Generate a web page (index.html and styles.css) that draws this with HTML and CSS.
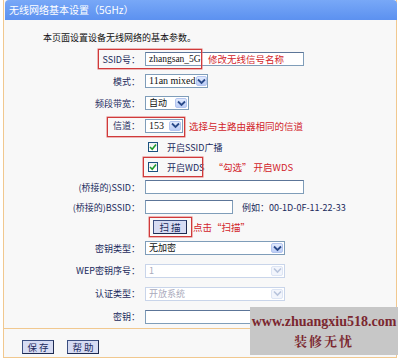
FILE: index.html
```html
<!DOCTYPE html>
<html lang="zh-CN">
<head>
    <meta charset="UTF-8">
    <title>无线网络基本设置（5GHz）</title>
    <link rel="stylesheet" href="styles.css">
</head>
<body>
    <div class="frame">
        <div class="title-bar">无线网络基本设置（5GHz）</div>

        <div class="content">
            <p class="intro">本页面设置设备无线网络的基本参数。</p>

            <!-- SSID -->
            <div class="row">
                <span class="label">SSID号：</span>
                <div class="field">
                    <span class="input input-wide">zhangsan_5G</span>
                </div>
                <span class="mark mark-ssid"></span>
                <span class="note note-ssid">修改无线信号名称</span>
            </div>

            <div class="row">
                <span class="label">模式：</span>
                <div class="field">
                    <span class="select select-mode">
                        <span class="select-text">11an mixed</span>
                        <span class="arrow"><svg width="9" height="7" viewBox="0 0 9 7"><path d="M1 1.5 L4.5 5 L8 1.5" fill="none" stroke="#2a4a8a" stroke-width="1.8"/></svg></span>
                    </span>
                </div>
            </div>

            <div class="row">
                <span class="label">频段带宽：</span>
                <div class="field">
                    <span class="select select-band">
                        <span class="select-text">自动</span>
                        <span class="arrow"><svg width="9" height="7" viewBox="0 0 9 7"><path d="M1 1.5 L4.5 5 L8 1.5" fill="none" stroke="#2a4a8a" stroke-width="1.8"/></svg></span>
                    </span>
                </div>
            </div>

            <div class="row row-loose">
                <span class="label">信道：</span>
                <div class="field">
                    <span class="select select-channel">
                        <span class="select-text">153</span>
                        <span class="arrow"><svg width="9" height="7" viewBox="0 0 9 7"><path d="M1 1.5 L4.5 5 L8 1.5" fill="none" stroke="#2a4a8a" stroke-width="1.8"/></svg></span>
                    </span>
                    <span class="note">选择与主路由器相同的信道</span>
                </div>
                <span class="mark mark-channel"></span>
            </div>

            <div class="row row-tight">
                <span class="label"></span>
                <div class="field">
                    <label class="check">
                        <span class="box"><svg width="8" height="8" viewBox="0 0 8 8"><path d="M1 4 L3.2 6.2 L7 1.5" fill="none" stroke="#1e9a2e" stroke-width="1.6"/></svg></span>
                        开启SSID广播
                    </label>
                </div>
            </div>

            <div class="row row-tight">
                <span class="label"></span>
                <div class="field">
                    <label class="check">
                        <span class="box"><svg width="8" height="8" viewBox="0 0 8 8"><path d="M1 4 L3.2 6.2 L7 1.5" fill="none" stroke="#1e9a2e" stroke-width="1.6"/></svg></span>
                        开启WDS
                    </label>
                    <span class="note note-wds">“勾选” 开启WDS</span>
                </div>
                <span class="mark mark-wds"></span>
            </div>

            <div class="row row-tight">
                <span class="label">(桥接的)SSID：</span>
                <div class="field">
                    <span class="input input-wide"></span>
                </div>
            </div>

            <div class="row row-tight">
                <span class="label">(桥接的)BSSID：</span>
                <div class="field">
                    <span class="input input-bssid"></span>
                    <span class="hint">例如：00-1D-0F-11-22-33</span>
                </div>
            </div>

            <div class="row row-tight">
                <span class="label"></span>
                <div class="field">
                    <button class="btn btn-scan">扫 描</button>
                    <span class="note">点击“扫描”</span>
                </div>
                <span class="mark mark-scan"></span>
            </div>

            <div class="row">
                <span class="label">密钥类型：</span>
                <div class="field">
                    <span class="select select-long">
                        <span class="select-text">无加密</span>
                        <span class="arrow"><svg width="9" height="7" viewBox="0 0 9 7"><path d="M1 1.5 L4.5 5 L8 1.5" fill="none" stroke="#2a4a8a" stroke-width="1.8"/></svg></span>
                    </span>
                </div>
            </div>

            <div class="row row-loose">
                <span class="label">WEP密钥序号：</span>
                <div class="field">
                    <span class="select select-long disabled">
                        <span class="select-text">1</span>
                        <span class="arrow"><svg width="9" height="7" viewBox="0 0 9 7"><path d="M1 1.5 L4.5 5 L8 1.5" fill="none" stroke="#b8c4dc" stroke-width="1.6"/></svg></span>
                    </span>
                </div>
            </div>

            <div class="row row-loose">
                <span class="label">认证类型：</span>
                <div class="field">
                    <span class="select select-long disabled">
                        <span class="select-text">开放系统</span>
                        <span class="arrow"><svg width="9" height="7" viewBox="0 0 9 7"><path d="M1 1.5 L4.5 5 L8 1.5" fill="none" stroke="#b8c4dc" stroke-width="1.6"/></svg></span>
                    </span>
                </div>
            </div>

            <div class="row row-loose">
                <span class="label">密钥：</span>
                <div class="field">
                    <span class="input input-key"></span>
                </div>
            </div>
        </div>

        <div class="footer">
            <button class="btn">保 存</button>
            <button class="btn">帮 助</button>
        </div>

        <!-- watermark -->
        <div class="watermark">
            <span>www.zhuangxiu518.com</span>
            <span class="watermark-cn">装修无忧</span>
        </div>
    </div>
</body>
</html>
```

FILE: styles.css
```css
/* Global */
* {
    box-sizing: border-box;
    margin: 0;
    padding: 0;
}

body {
    background: #fff;
    font-family: "Noto Sans CJK SC", "Liberation Sans", sans-serif;
    font-size: 9px;
    color: #111;
}

/* Frame */
.frame {
    position: relative;
    margin-left: 3px;
    width: 394px;
    height: 358px;
    background: #f8f8f8;
    border: 1px solid #f1c88f;
    border-top: none;
}

.title-bar {
    height: 20px;
    margin: 0 -1px 0 1px;
    padding-left: 4px;
    background: linear-gradient(#78a8f7, #5c91f0);
    border-radius: 4px 4px 0 0;
    color: #fff;
    font-size: 10px;
    line-height: 20px;
}

.content {
    padding-top: 8px;
}

.intro {
    height: 20px;
    line-height: 20px;
    padding-left: 39px;
}

/* Rows */
.row {
    position: relative;
    display: grid;
    grid-template-columns: 136px 1fr;
    column-gap: 5px;
    align-items: center;
    height: 22px;
}

.row-loose {
    height: 23px;
}

.row-tight {
    height: 20px;
}

.label {
    text-align: right;
    color: #1b2a5c;
    white-space: nowrap;
}

.field {
    display: flex;
    align-items: center;
    white-space: nowrap;
}

/* Inputs */
.input {
    display: block;
    height: 14px;
    padding-left: 3px;
    background: #fff;
    border: 1px solid #7f9db9;
    border-top-color: #5c7598;
    font-family: "Liberation Serif", "Noto Sans CJK SC", serif;
    font-size: 9.5px;
    line-height: 12px;
    color: #111;
}

.input-wide {
    width: 159px;
}

.input-bssid {
    width: 88px;
}

.input-key {
    width: 159px;
}

.hint {
    margin-left: 9px;
    color: #1b2a5c;
}

/* Selects */
.select {
    display: flex;
    align-items: center;
    justify-content: space-between;
    height: 14px;
    padding: 0 1px 0 3px;
    background: #fff;
    border: 1px solid #7f9db9;
}

.select-text {
    line-height: 12px;
}

.select-mode {
    width: 63px;
    font-family: "Liberation Serif", serif;
    font-size: 10px;
}

.select-band {
    width: 44px;
}

.select-channel {
    width: 38px;
    font-family: "Liberation Serif", serif;
    font-size: 10px;
}

.select-long {
    width: 140px;
}

.arrow {
    display: flex;
    align-items: center;
    justify-content: center;
    width: 12px;
    height: 10px;
    background: linear-gradient(#e1eafd, #bccdf6);
    border: 1px solid #b3c5ef;
    border-radius: 2px;
}

.select.disabled {
    border-color: #c9d5ea;
    color: #aab;
}

.select.disabled .arrow {
    background: #f2f5fc;
    border-color: #dde5f4;
}

/* Checkbox */
.check {
    display: flex;
    align-items: center;
    gap: 9px;
    margin-left: 3px;
    color: #1b2a5c;
}

.box {
    display: flex;
    align-items: center;
    justify-content: center;
    width: 10px;
    height: 10px;
    background: linear-gradient(#eef0ee, #fff);
    border: 1px solid #1c5180;
}

/* Buttons */
.btn {
    height: 14px;
    padding: 0;
    background: #d7dcf3;
    border: 1px solid #3c4f82;
    border-right-color: #1e2a50;
    border-bottom-color: #1e2a50;
    font-family: "Noto Sans CJK SC", sans-serif;
    font-size: 9.5px;
    line-height: 12px;
    color: #1b2a5c;
    white-space: nowrap;
}

.btn-scan {
    margin-left: 8px;
    width: 34px;
}

/* Annotations */
.note {
    margin-left: 6px;
    color: #d2232a;
    font-size: 9.5px;
}

.note-wds {
    margin-left: 9px;
}

.note-ssid {
    position: absolute;
    left: 204px;
    top: 5px;
    line-height: 12px;
    margin: 0;
}

.mark {
    position: absolute;
    border: 1px solid #d03a3a;
    box-shadow: 0 0 0 0.5px #e07070;
}

.mark-ssid {
    left: 94px;
    top: 1px;
    width: 104px;
    height: 20px;
}

.mark-channel {
    left: 103px;
    top: 3px;
    width: 78px;
    height: 20px;
}

.mark-wds {
    left: 139px;
    top: 0;
    width: 60px;
    height: 20px;
}

.mark-scan {
    left: 145px;
    top: 0;
    width: 43px;
    height: 20px;
}

/* Footer */
.footer {
    display: flex;
    gap: 13px;
    height: 30px;
    padding: 11px 0 0 18px;
    border-top: 1px solid #f1c88f;
}

.footer .btn {
    width: 32px;
}

/* Watermark */
.watermark {
    position: absolute;
    left: 246px;
    top: 307px;
    width: 148px;
    height: 48px;
    display: flex;
    flex-direction: column;
    align-items: center;
    justify-content: center;
    background: #c7c7c7;
    color: #7b2730;
    font-family: "Liberation Serif", "Noto Sans CJK SC", serif;
    font-size: 14px;
    font-weight: bold;
    line-height: 19px;
}

.watermark-cn {
    font-family: "Noto Serif CJK SC", "Noto Sans CJK SC", serif;
    font-size: 13px;
    letter-spacing: 2px;
}
```
